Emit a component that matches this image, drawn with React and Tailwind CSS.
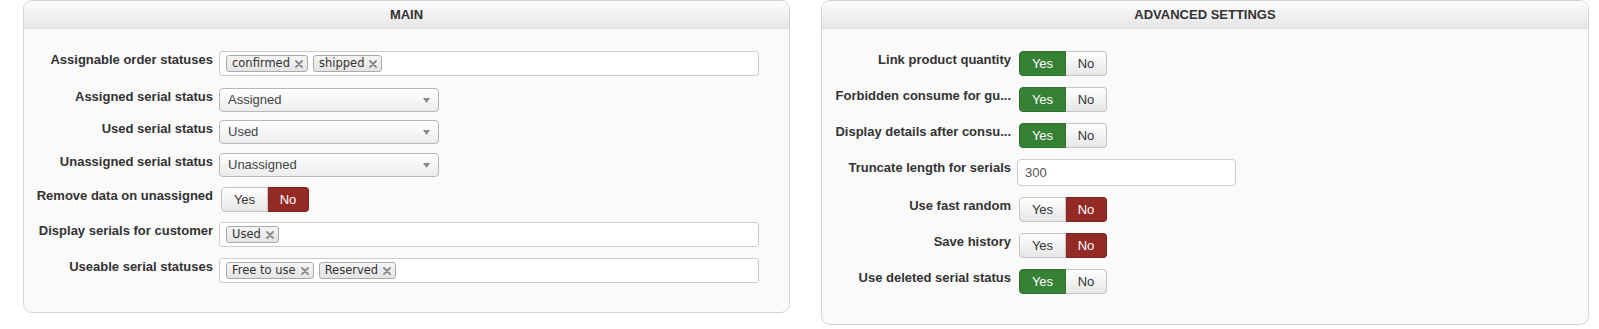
import React from 'react';

const font = { fontFamily: '"Liberation Sans", Arial, sans-serif' };

const Panel = ({ title, className = '', children }) => (
  <div className={`${className} border border-[#d3d3d3] rounded-[9px] bg-[#fafafa] overflow-hidden`}>
    <div className="h-[28px] bg-gradient-to-b from-[#fdfdfd] to-[#e6e6e6] border-b border-[#e0e0e0] text-center text-[13px] font-bold leading-[28px] text-[#333] uppercase">
      {title}
    </div>
    {children}
  </div>
);

const Row = ({ label, h, children }) => (
  <div className={`flex items-start ${h}`}>
    <div className="w-[189px] shrink-0 text-right text-[13px] font-bold leading-[17px] text-[#333] whitespace-nowrap overflow-hidden">
      {label}
    </div>
    {children}
  </div>
);

const Tag = ({ text }) => (
  <span className="flex items-center h-[17px] pl-[5px] pr-[4px] gap-[5px] border border-[#aaa] rounded-[3px] bg-gradient-to-b from-[#f5f5f5] to-[#e4e4e4] text-[11.5px] text-[#333] leading-none font-['DejaVu_Sans',sans-serif]">
    {text}
    <svg width="8" height="8" viewBox="0 0 8 8" className="mt-[1px]">
      <path d="M1 1 L7 7 M7 1 L1 7" stroke="#8a8a8a" strokeWidth="1.8" strokeLinecap="round" />
    </svg>
  </span>
);

const TagBox = ({ tags }) => (
  <div className="ml-[6px] w-[540px] h-[25px] border border-[#ccc] rounded-[3px] bg-white flex items-center gap-[5px] pl-[6px]">
    {tags.map((t) => (
      <Tag key={t} text={t} />
    ))}
  </div>
);

const Select = ({ value }) => (
  <div className="ml-[6px] w-[220px] h-[24px] border border-[#b8b8b8] rounded-[4px] bg-gradient-to-b from-white to-[#ececec] flex items-center justify-between pl-[8px] pr-[8px] text-[13px] text-[#444]">
    <span>{value}</span>
    <svg width="7" height="5" viewBox="0 0 7 5">
      <path d="M0 0 H7 L3.5 5 Z" fill="#888" />
    </svg>
  </div>
);

const Toggle = ({ yes }) => (
  <div className="ml-[8px] flex h-[25px] text-[13px] leading-none">
    <div
      className={`w-[47px] flex items-center justify-center rounded-l-[4px] border ${
        yes
          ? 'bg-[#378137] border-[#2f6f2f] text-white'
          : 'bg-gradient-to-b from-white to-[#e6e6e6] border-[#c4c4c4] text-[#333]'
      }`}
    >
      Yes
    </div>
    <div
      className={`w-[41px] flex items-center justify-center rounded-r-[4px] border border-l-0 ${
        yes
          ? 'bg-gradient-to-b from-white to-[#e6e6e6] border-[#c4c4c4] text-[#333]'
          : 'bg-[#942a25] border-[#7e231f] text-white'
      }`}
    >
      No
    </div>
  </div>
);

export default function App() {
  return (
    <div className="flex items-start pl-[23px] bg-white w-[1599px] h-[329px]" style={font}>
      <Panel title="Main" className="w-[767px]">
        <div className="pt-[22px] pb-[29px]">
          <Row label="Assignable order statuses" h="h-[37px]">
            <TagBox tags={['confirmed', 'shipped']} />
          </Row>
          <Row label="Assigned serial status" h="h-[32px]">
            <Select value="Assigned" />
          </Row>
          <Row label="Used serial status" h="h-[33px]">
            <Select value="Used" />
          </Row>
          <Row label="Unassigned serial status" h="h-[34px]">
            <Select value="Unassigned" />
          </Row>
          <Row label="Remove data on unassigned" h="h-[35px]">
            <Toggle yes={false} />
          </Row>
          <Row label="Display serials for customer" h="h-[36px]">
            <TagBox tags={['Used']} />
          </Row>
          <Row label="Useable serial statuses" h="h-[25px]">
            <TagBox tags={['Free to use', 'Reserved']} />
          </Row>
        </div>
      </Panel>

      <Panel title="Advanced settings" className="ml-[31px] w-[768px]">
        <div className="pt-[22px] pb-[30px]">
          <Row label="Link product quantity" h="h-[36px]">
            <Toggle yes />
          </Row>
          <Row label="Forbidden consume for gu..." h="h-[36px]">
            <Toggle yes />
          </Row>
          <Row label="Display details after consu..." h="h-[36px]">
            <Toggle yes />
          </Row>
          <Row label="Truncate length for serials" h="h-[38px]">
            <div className="ml-[6px] w-[219px] h-[27px] border border-[#ccc] rounded-[4px] bg-white flex items-center pl-[7px] text-[13px] text-[#555]">
              300
            </div>
          </Row>
          <Row label="Use fast random" h="h-[36px]">
            <Toggle yes={false} />
          </Row>
          <Row label="Save history" h="h-[36px]">
            <Toggle yes={false} />
          </Row>
          <Row label="Use deleted serial status" h="h-[25px]">
            <Toggle yes />
          </Row>
        </div>
      </Panel>
    </div>
  );
}
